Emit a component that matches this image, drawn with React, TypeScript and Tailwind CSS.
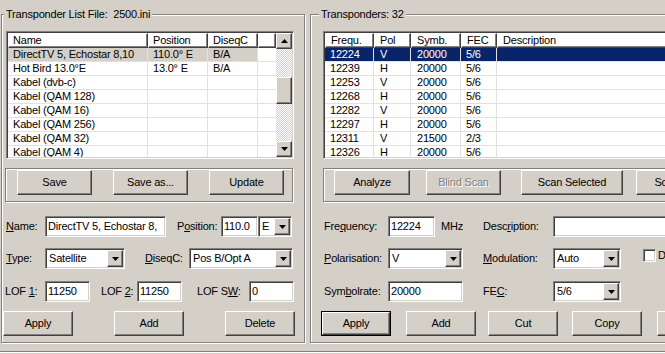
import type { ReactNode } from "react";

const raisedCls =
  "border border-t-white border-l-white border-r-[#404040] border-b-[#404040] shadow-[inset_-1px_-1px_0_#808080]";
const sunkenCls =
  "border border-t-[#808080] border-l-[#808080] border-r-white border-b-white shadow-[inset_1px_1px_0_#404040,inset_-1px_-1px_0_#d4d0c8] p-[1px]";
const etchedCls = "border border-[#808080] shadow-[inset_1px_1px_0_#fff,1px_1px_0_#fff]";
const gridLine = "border-[#e2e1dd]";

const DownArrow = () => (
  <svg width="7" height="4" viewBox="0 0 7 4">
    <path d="M0 0h7L3.5 4z" fill="#000" />
  </svg>
);

const UpArrow = () => (
  <svg width="7" height="4" viewBox="0 0 7 4">
    <path d="M0 4h7L3.5 0z" fill="#000" />
  </svg>
);

function Btn({
  className,
  children,
  disabled = false,
  primary = false,
}: {
  className: string;
  children: ReactNode;
  disabled?: boolean;
  primary?: boolean;
}) {
  const face = `flex h-full w-full items-center justify-center ${raisedCls} ${
    disabled ? "text-[#808080] [text-shadow:1px_1px_0_#fff]" : "text-black"
  }`;
  return (
    <div className={`h-[25px] shrink-0 ${primary ? "border border-black" : ""} ${className}`}>
      <div className={face}>{children}</div>
    </div>
  );
}

function Edit({ className, value }: { className: string; value: string }) {
  return (
    <div
      className={`flex h-[21px] shrink-0 items-center overflow-hidden whitespace-nowrap bg-white pl-[2px] ${sunkenCls} ${className}`}
    >
      {value}
    </div>
  );
}

function Combo({ className, value }: { className: string; value: string }) {
  return (
    <div className={`flex h-[21px] shrink-0 bg-white ${sunkenCls} ${className}`}>
      <div className="flex flex-1 items-center overflow-hidden whitespace-nowrap pl-[2px]">{value}</div>
      <div className={`flex h-full w-[16px] items-center justify-center bg-[#d4d0c8] ${raisedCls}`}>
        <DownArrow />
      </div>
    </div>
  );
}

function HeadCell({ className, children }: { className: string; children?: ReactNode }) {
  return (
    <div className={`flex h-[15px] shrink-0 items-center pl-[4px] ${raisedCls} ${className}`}>
      {children}
    </div>
  );
}

const leftRows = [
  ["DirectTV 5, Echostar 8,10", "110.0° E", "B/A"],
  ["Hot Bird 13.0°E", "13.0° E", "B/A"],
  ["Kabel (dvb-c)", "", ""],
  ["Kabel (QAM 128)", "", ""],
  ["Kabel (QAM 16)", "", ""],
  ["Kabel (QAM 256)", "", ""],
  ["Kabel (QAM 32)", "", ""],
  ["Kabel (QAM 4)", "", ""],
];

const rightRows = [
  ["12224", "V", "20000", "5/6"],
  ["12239", "H", "20000", "5/6"],
  ["12253", "V", "20000", "5/6"],
  ["12268", "H", "20000", "5/6"],
  ["12282", "V", "20000", "5/6"],
  ["12297", "H", "20000", "5/6"],
  ["12311", "V", "21500", "2/3"],
  ["12326", "H", "20000", "5/6"],
];

function LeftList() {
  return (
    <div className={`ml-[4px] mt-[16px] flex h-[128px] w-[288px] shrink-0 bg-white ${sunkenCls}`}>
      <div className="flex-1 overflow-hidden">
        <div className="flex">
          <HeadCell className="w-[140px]">Name</HeadCell>
          <HeadCell className="w-[60px]">Position</HeadCell>
          <HeadCell className="w-[50px]">DiseqC</HeadCell>
          <HeadCell className="w-[18px]" />
        </div>
        {leftRows.map((row, i) => {
          const sel = i === 0 ? "bg-[#d4d0c8]" : "";
          return (
            <div key={row[0]} className={`flex h-[14px] border-b ${gridLine}`}>
              <div className={`w-[140px] shrink-0 border-r pl-[5px] leading-[13px] ${gridLine} ${sel}`}>{row[0]}</div>
              <div className={`w-[60px] shrink-0 border-r pl-[5px] leading-[13px] ${gridLine} ${sel}`}>{row[1]}</div>
              <div className={`w-[50px] shrink-0 border-r pl-[5px] leading-[13px] ${gridLine} ${sel}`}>{row[2]}</div>
              <div className="w-[18px] shrink-0" />
            </div>
          );
        })}
      </div>
      <div className="flex w-[16px] shrink-0 flex-col">
        <div className={`flex h-[16px] items-center justify-center bg-[#d4d0c8] ${raisedCls}`}>
          <UpArrow />
        </div>
        <div className="flex-1 [background-image:repeating-conic-gradient(#fff_0%_25%,#d4d0c8_0%_50%)] [background-size:2px_2px]">
          <div className={`mt-[28px] h-[27px] bg-[#d4d0c8] ${raisedCls}`} />
        </div>
        <div className={`flex h-[16px] items-center justify-center bg-[#d4d0c8] ${raisedCls}`}>
          <DownArrow />
        </div>
      </div>
    </div>
  );
}

function RightList() {
  return (
    <div className={`ml-[12px] mt-[16px] h-[128px] w-[380px] shrink-0 overflow-hidden bg-white ${sunkenCls}`}>
      <div className="flex">
        <HeadCell className="w-[49px] pl-[5px]">Frequ.</HeadCell>
        <HeadCell className="w-[37px] pl-[5px]">Pol</HeadCell>
        <HeadCell className="w-[50px] pl-[5px]">Symb.</HeadCell>
        <HeadCell className="w-[36px] pl-[5px]">FEC</HeadCell>
        <HeadCell className="w-[250px] pl-[5px]">Description</HeadCell>
      </div>
      {rightRows.map((row, i) => {
        const sel = i === 0 ? "bg-[#0a246a] text-white" : "";
        return (
          <div key={row[0]} className={`flex h-[14px] border-b ${gridLine} ${sel}`}>
            <div className={`w-[49px] shrink-0 border-r pl-[5px] leading-[13px] ${gridLine}`}>{row[0]}</div>
            <div className={`w-[37px] shrink-0 border-r pl-[6px] leading-[13px] ${gridLine}`}>{row[1]}</div>
            <div className={`w-[50px] shrink-0 border-r pl-[6px] leading-[13px] ${gridLine}`}>{row[2]}</div>
            <div className={`w-[36px] shrink-0 border-r pl-[5px] leading-[13px] ${gridLine}`}>{row[3]}</div>
            <div className="flex-1" />
          </div>
        );
      })}
    </div>
  );
}

export default function App() {
  return (
    <div className="flex h-[354px] w-[665px] flex-col overflow-hidden bg-[#d4d0c8] text-[11px] tracking-[-0.2px] text-black [font-family:'Liberation_Sans',Arial,sans-serif]">
      <div className="flex">
        {/* transponder list file */}
        <div className={`relative ml-[1px] mt-[14px] flex h-[329px] w-[304px] shrink-0 flex-col ${etchedCls}`}>
          <span className="absolute -top-[8px] left-[2px] bg-[#d4d0c8] px-[2px] leading-[14px]">
            Transponder List File:&nbsp;&nbsp;2500.ini
          </span>
          <LeftList />

          <div className={`ml-[3px] mt-[9px] flex h-[34px] w-[288px] shrink-0 items-start pt-[1px] ${etchedCls}`}>
            <Btn className="ml-[11px] w-[75px]">Save</Btn>
            <Btn className="ml-[21px] w-[75px]">Save as...</Btn>
            <Btn className="ml-[21px] w-[75px]">Update</Btn>
          </div>

          <div className="ml-[4px] mt-[14px] flex items-center">
            <span className="w-[39px] shrink-0">
              <u>N</u>ame:
            </span>
            <Edit className="w-[121px]" value="DirectTV 5, Echostar 8," />
            <span className="ml-[11px] w-[44px] shrink-0">
              P<u>o</u>sition:
            </span>
            <Edit className="w-[37px]" value="110.0" />
            <Combo className="w-[34px]" value="E" />
          </div>

          <div className="ml-[4px] mt-[11px] flex items-center">
            <span className="w-[39px] shrink-0">
              <u>T</u>ype:
            </span>
            <Combo className="w-[80px]" value="Satellite" />
            <span className="ml-[20px] w-[44px] shrink-0">
              <u>D</u>iseqC:
            </span>
            <Combo className="w-[104px]" value="Pos B/Opt A" />
          </div>

          <div className="ml-[3px] mt-[12px] flex items-center">
            <span className="w-[40px] shrink-0">
              LOF <u>1</u>:
            </span>
            <Edit className="w-[45px]" value="11250" />
            <span className="ml-[11px] w-[36px] shrink-0">
              LOF <u>2</u>:
            </span>
            <Edit className="w-[45px]" value="11250" />
            <span className="ml-[15px] w-[52px] shrink-0">
              LOF S<u>W</u>:
            </span>
            <Edit className="w-[45px]" value="0" />
          </div>

          <div className="ml-[1px] mt-[9px] flex">
            <Btn className="w-[70px]">Apply</Btn>
            <Btn className="ml-[41px] w-[70px]">Add</Btn>
            <Btn className="ml-[41px] w-[70px]">Delete</Btn>
          </div>
        </div>

        {/* transponders */}
        <div className={`relative ml-[5px] mt-[14px] flex h-[329px] w-[420px] shrink-0 flex-col ${etchedCls}`}>
          <span className="absolute -top-[8px] left-[8px] bg-[#d4d0c8] px-[2px] leading-[14px]">Transponders: 32</span>
          <RightList />

          <div className={`ml-[12px] mt-[9px] flex h-[34px] w-[400px] shrink-0 items-start pt-[1px] ${etchedCls}`}>
            <Btn className="ml-[10px] w-[76px]">Analyze</Btn>
            <Btn className="ml-[16px] w-[75px]" disabled>
              Blind Scan
            </Btn>
            <Btn className="ml-[20px] w-[102px]">Scan Selected</Btn>
            <Btn className="ml-[13px] w-[75px]">Scan All</Btn>
          </div>

          <div className="ml-[13px] mt-[14px] flex items-center">
            <span className="w-[64px] shrink-0">
              Fre<u>q</u>uency:
            </span>
            <Edit className="w-[47px]" value="12224" />
            <span className="ml-[6px] w-[42px] shrink-0">MHz</span>
            <span className="w-[70px] shrink-0">
              Desc<u>r</u>iption:
            </span>
            <Edit className="w-[150px]" value="" />
          </div>

          <div className="ml-[13px] mt-[11px] flex items-center">
            <span className="w-[64px] shrink-0">
              <u>P</u>olarisation:
            </span>
            <Combo className="w-[75px]" value="V" />
            <span className="ml-[20px] w-[70px] shrink-0">
              <u>M</u>odulation:
            </span>
            <Combo className="w-[68px]" value="Auto" />
            <div className={`ml-[22px] -mt-[7px] h-[13px] w-[13px] shrink-0 bg-white ${sunkenCls}`} />
            <span className="ml-[2px] -mt-[7px] whitespace-nowrap">DVB-S2</span>
          </div>

          <div className="ml-[13px] mt-[12px] flex items-center">
            <span className="w-[64px] shrink-0">
              Sym<u>b</u>olrate:
            </span>
            <Edit className="w-[75px]" value="20000" />
            <span className="ml-[20px] w-[70px] shrink-0">
              FE<u>C</u>:
            </span>
            <Combo className="w-[68px]" value="5/6" />
          </div>

          <div className="ml-[10px] mt-[9px] flex">
            <Btn className="w-[70px]" primary>
              Apply
            </Btn>
            <Btn className="ml-[15px] w-[70px]">Add</Btn>
            <Btn className="ml-[12px] w-[70px]">Cut</Btn>
            <Btn className="ml-[14px] w-[70px]">Copy</Btn>
            <Btn className="ml-[15px] w-[70px]">Paste</Btn>
          </div>
        </div>
      </div>

      <div className="mt-[8px] h-[3px] shrink-0 border-t border-[#808080] shadow-[inset_0_1px_0_#fff]" />
    </div>
  );
}
